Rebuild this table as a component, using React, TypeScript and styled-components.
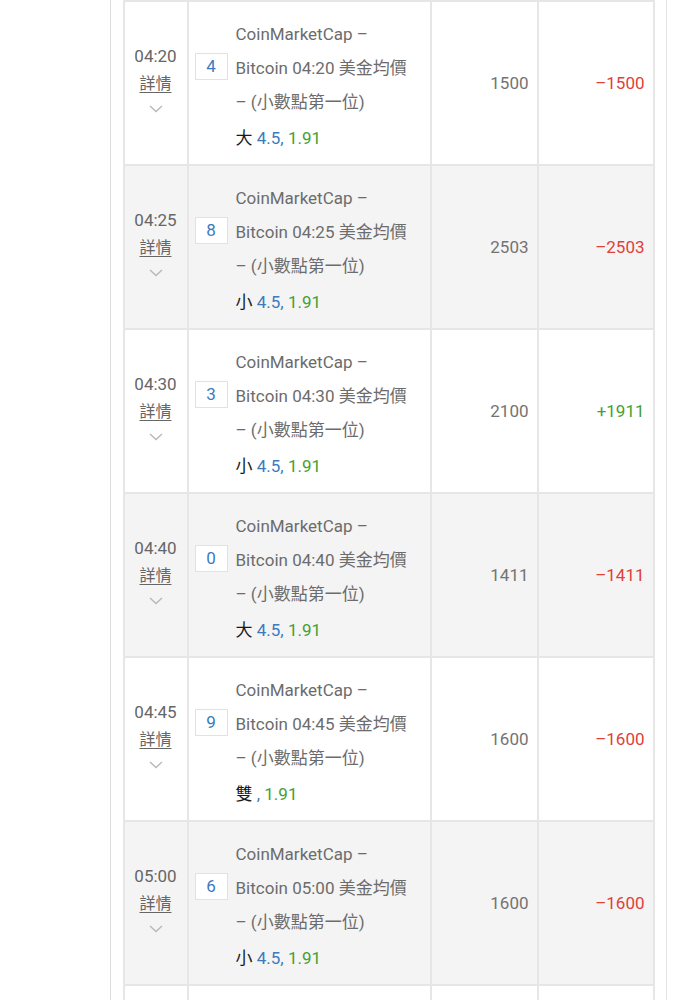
import styled, { createGlobalStyle } from 'styled-components'

const GlobalStyle = createGlobalStyle`
  html, body {
    margin: 0;
    padding: 0;
    background: #ffffff;
    font-family: Roboto, "Noto Sans CJK TC", sans-serif;
  }
`

interface Bet {
  time: string
  ball: number
  pick: string
  line?: string
  odds: string
  stake: number
  result: number
}

const BETS: Bet[] = [
  { time: '04:20', ball: 4, pick: '大', line: '4.5', odds: '1.91', stake: 1500, result: -1500 },
  { time: '04:25', ball: 8, pick: '小', line: '4.5', odds: '1.91', stake: 2503, result: -2503 },
  { time: '04:30', ball: 3, pick: '小', line: '4.5', odds: '1.91', stake: 2100, result: 1911 },
  { time: '04:40', ball: 0, pick: '大', line: '4.5', odds: '1.91', stake: 1411, result: -1411 },
  { time: '04:45', ball: 9, pick: '雙', odds: '1.91', stake: 1600, result: -1600 },
  { time: '05:00', ball: 6, pick: '小', line: '4.5', odds: '1.91', stake: 1600, result: -1600 },
  { time: '05:05', ball: 2, pick: '大', line: '4.5', odds: '1.91', stake: 1600, result: -1600 },
]

const Page = styled.div`
  display: flex;
  width: 674px;
  height: 1000px;
  overflow: hidden;
`

const SideGap = styled.div`
  width: 110px;
  flex-shrink: 0;
`

const Panel = styled.div`
  width: 557px;
  flex-shrink: 0;
  border-left: 1.5px solid #dcdcdc;
  border-right: 1.5px solid #e4e4e4;
  padding: 0 12px 0 11.5px;
  box-sizing: border-box;
`

const Table = styled.table`
  width: 530px;
  border-collapse: collapse;
  table-layout: fixed;
`

const Row = styled.tr<{ $shaded: boolean }>`
  background: ${(p) => (p.$shaded ? '#f4f4f4' : '#ffffff')};
  height: 164px;
`

const Cell = styled.td`
  box-sizing: border-box;
  border: 2px solid #e6e6e6;
  padding: 0;
  vertical-align: middle;
`

const TimeCell = styled(Cell)`
  width: 64px;
  text-align: center;
  color: #666666;
  padding-bottom: 12px;
`

const TimeText = styled.div`
  font-size: 17px;
  line-height: 30px;
`

const DetailLink = styled.div`
  font-size: 16px;
  line-height: 26px;
  text-decoration: underline;
  text-underline-offset: 3px;
  color: #666666;
`

const Chevron = styled.svg`
  display: block;
  margin: 8px auto 0;
`

const DescCell = styled(Cell)`
  width: 243px;
`

const DescInner = styled.div`
  display: flex;
  align-items: flex-start;
  padding: 7px 2px 0 6px;
`

const BallBox = styled.div`
  width: 31px;
  height: 25px;
  flex-shrink: 0;
  margin-top: 36px;
  border: 1px solid #e2e2e2;
  background: #ffffff;
  color: #3a7bc0;
  font-size: 17px;
  display: flex;
  align-items: center;
  justify-content: center;
`

const DescText = styled.div`
  margin-left: 8px;
  font-size: 17px;
  line-height: 34px;
  color: #6c6c6c;
  white-space: nowrap;
`

const PickLine = styled.div`
  line-height: 38px;
`

const Pick = styled.span`
  color: #1a1a1a;
`

const Line = styled.span`
  color: #3a7bc0;
`

const Odds = styled.span`
  color: #45a035;
`

const AmountCell = styled(Cell)`
  width: 107px;
  text-align: right;
  padding-right: 8px;
  font-size: 17px;
  color: #737373;
`

const ResultCell = styled(Cell)<{ $win: boolean }>`
  width: 116px;
  text-align: right;
  padding-right: 8px;
  font-size: 17px;
  color: ${(p) => (p.$win ? '#45a035' : '#e0403a')};
`

function formatResult(n: number): string {
  return n >= 0 ? `+${n}` : `\u2013${Math.abs(n)}`
}

export default function App() {
  return (
    <Page>
      <GlobalStyle />
      <SideGap />
      <Panel>
        <Table>
          <tbody>
            {BETS.map((b, i) => (
              <Row key={b.time} $shaded={i % 2 === 1}>
                <TimeCell>
                  <TimeText>{b.time}</TimeText>
                  <DetailLink>詳情</DetailLink>
                  <Chevron width="14" height="8" viewBox="0 0 14 8">
                    <path d="M1 1 L7 6.5 L13 1" fill="none" stroke="#b8b8b8" strokeWidth="1.4" />
                  </Chevron>
                </TimeCell>
                <DescCell>
                  <DescInner>
                    <BallBox>{b.ball}</BallBox>
                    <DescText>
                      <div>CoinMarketCap –</div>
                      <div>Bitcoin {b.time} 美金均價</div>
                      <div>– (小數點第一位)</div>
                      <PickLine>
                        <Pick>{b.pick}</Pick> <Line>{b.line ? `${b.line},` : ','}</Line>{' '}
                        <Odds>{b.odds}</Odds>
                      </PickLine>
                    </DescText>
                  </DescInner>
                </DescCell>
                <AmountCell>{b.stake}</AmountCell>
                <ResultCell $win={b.result > 0}>{formatResult(b.result)}</ResultCell>
              </Row>
            ))}
          </tbody>
        </Table>
      </Panel>
    </Page>
  )
}
